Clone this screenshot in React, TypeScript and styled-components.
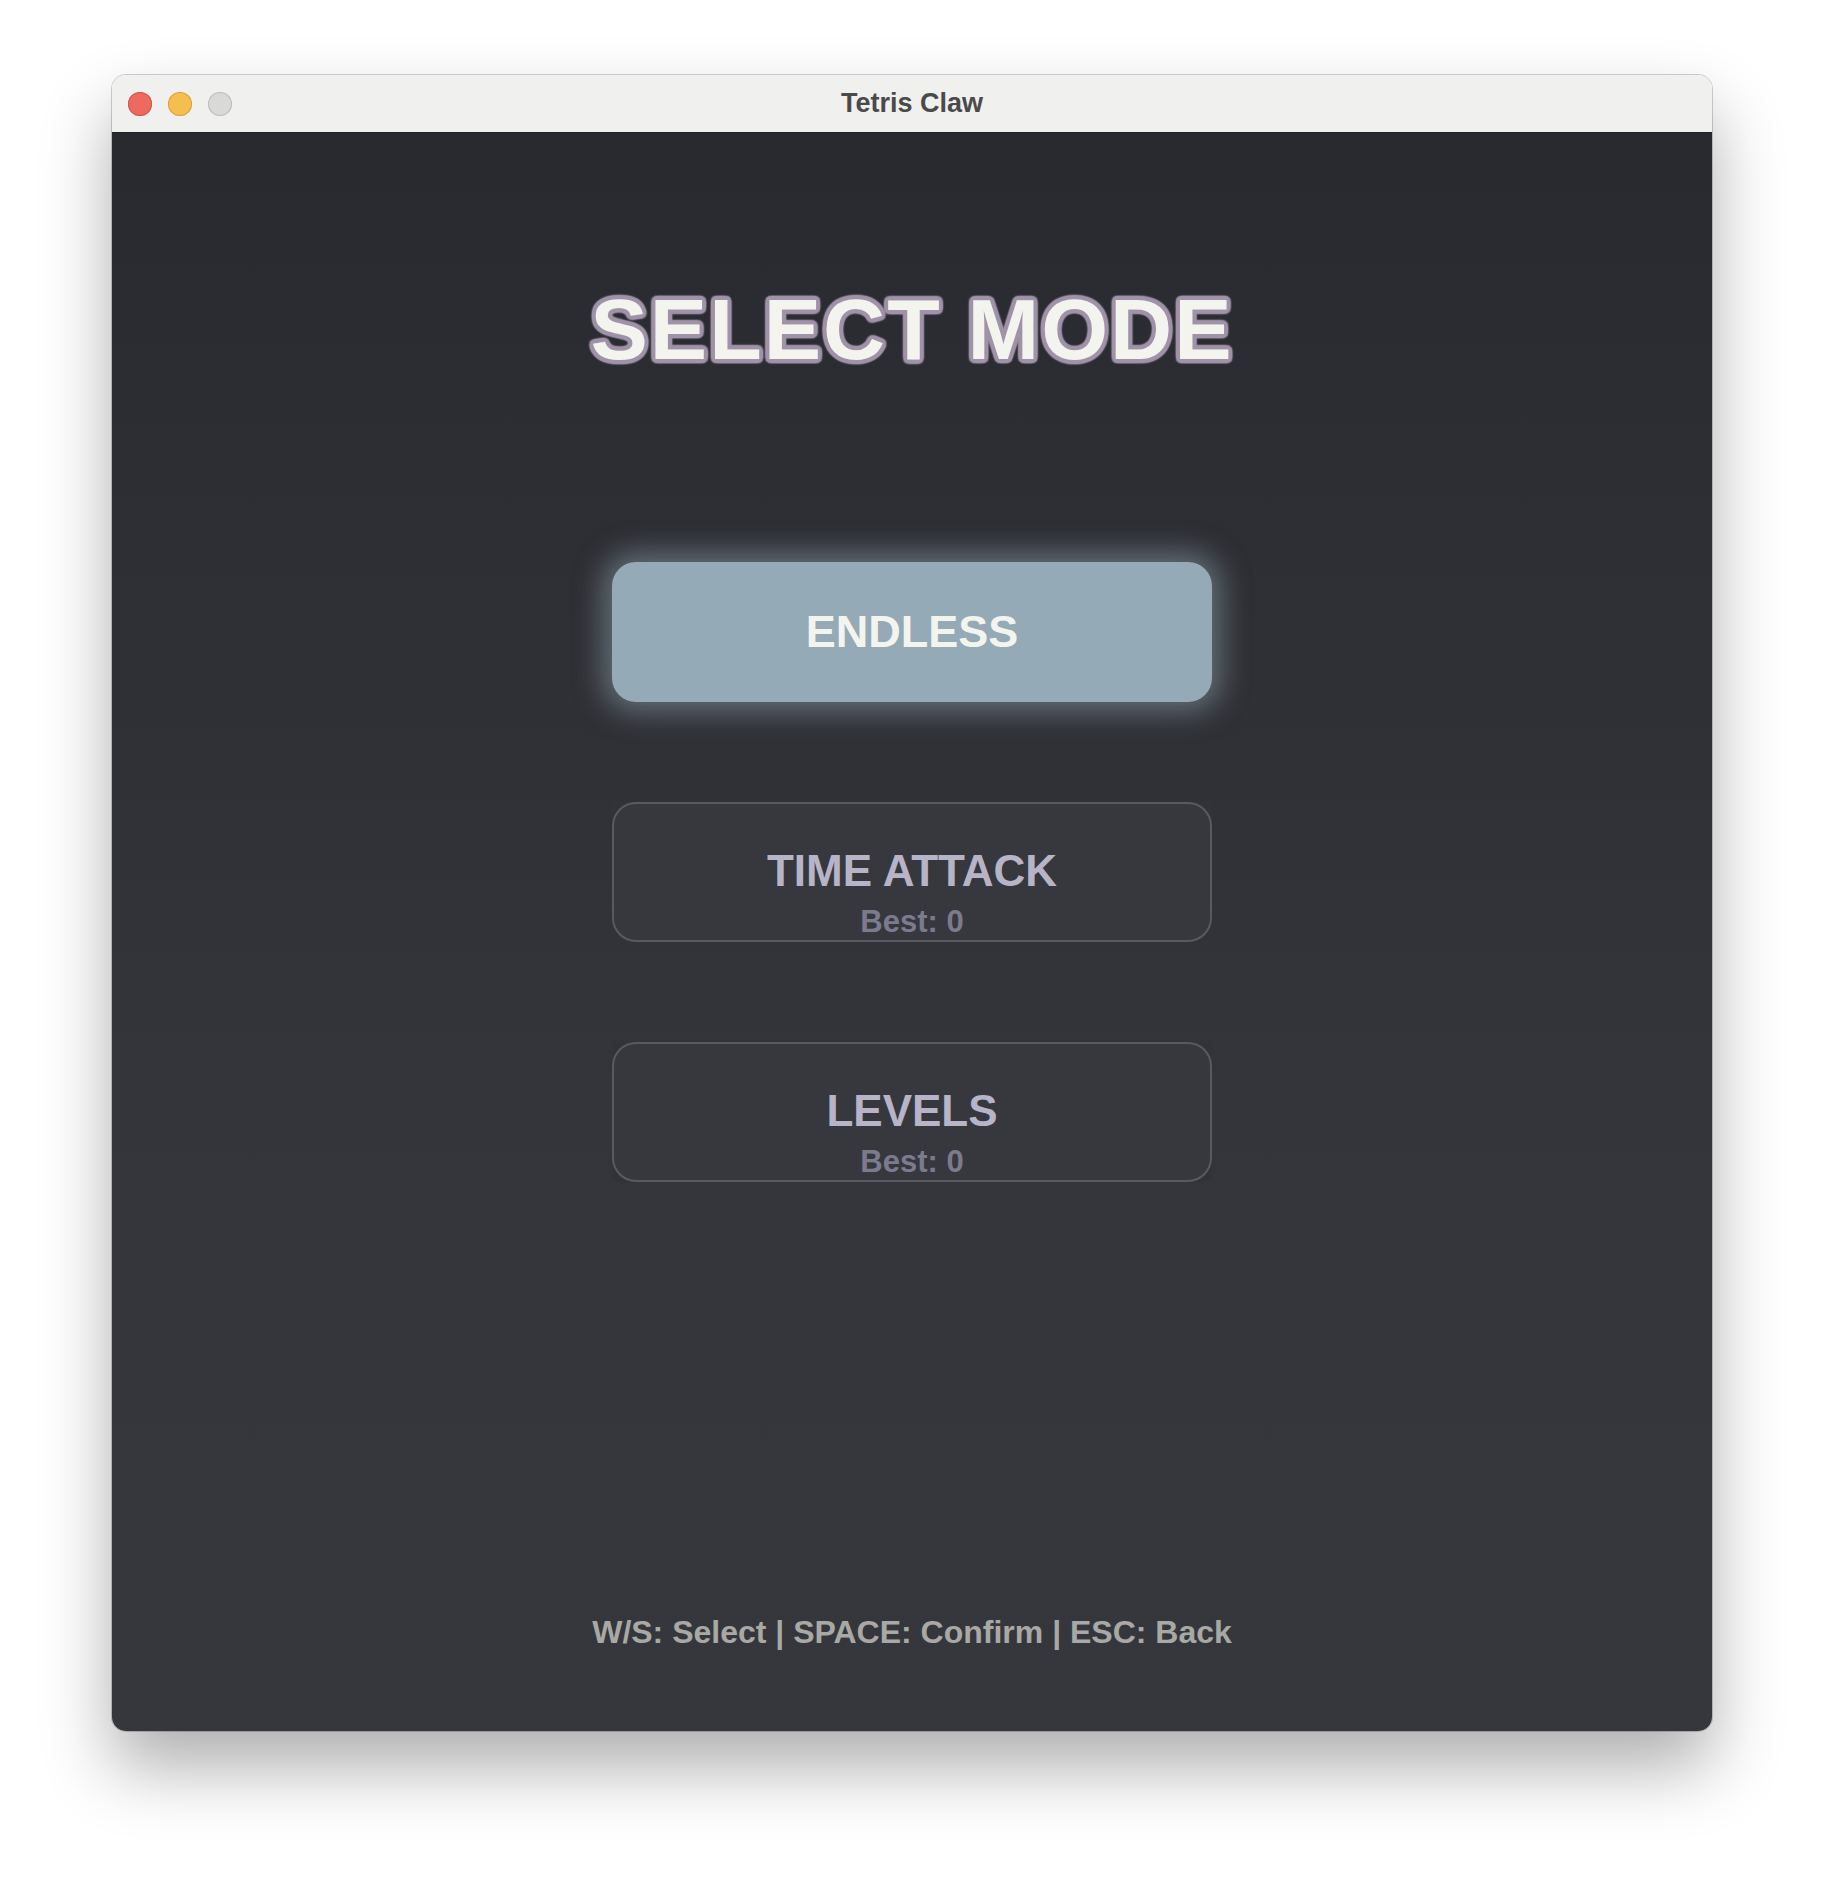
import React, { useState } from 'react';
import styled, { createGlobalStyle, css } from 'styled-components';

const MODES = [
  { id: 'endless', label: 'ENDLESS', best: null as number | null },
  { id: 'time_attack', label: 'TIME ATTACK', best: 0 },
  { id: 'levels', label: 'LEVELS', best: 0 },
];

const GlobalStyle = createGlobalStyle`
  html, body {
    margin: 0;
    padding: 0;
    background: #ffffff;
  }
  body {
    font-family: 'Liberation Sans', Arial, sans-serif;
  }
`;

const Page = styled.div`
  width: 1824px;
  height: 1880px;
  display: flex;
  justify-content: center;
  padding-top: 75px;
  box-sizing: border-box;
  background: #ffffff;
`;

const Window = styled.div`
  width: 1600px;
  height: 1656px;
  display: flex;
  flex-direction: column;
  border-radius: 14px;
  overflow: hidden;
  box-shadow: 0 36px 70px rgba(0, 0, 0, 0.32), 0 0 0 1px rgba(0, 0, 0, 0.18);
`;

const TitleBar = styled.div`
  height: 58px;
  flex-shrink: 0;
  display: flex;
  align-items: center;
  position: relative;
  padding-left: 16px;
  gap: 16px;
  background: #f0f0ee;
  border-bottom: 1px solid #1f1f22;
  box-sizing: border-box;
`;

const Light = styled.span<{ $fill: string; $edge: string }>`
  width: 24px;
  height: 24px;
  border-radius: 50%;
  background: ${p => p.$fill};
  box-shadow: inset 0 0 0 1px ${p => p.$edge};
`;

const WindowTitle = styled.div`
  position: absolute;
  left: 0;
  right: 0;
  text-align: center;
  font-family: 'Liberation Sans', Arial, sans-serif;
  font-weight: 700;
  font-size: 27px;
  color: #4a4a4a;
  pointer-events: none;
`;

const Content = styled.div`
  flex: 1;
  display: flex;
  flex-direction: column;
  align-items: center;
  padding-top: 146px;
  padding-bottom: 79px;
  background: linear-gradient(180deg, #292a2f 0%, #34353a 60%, #36373c 100%);
`;

const outline = (c: string, r: number) => {
  const parts: string[] = [];
  for (let i = 0; i < 16; i++) {
    const a = (i / 16) * Math.PI * 2;
    parts.push(`${(Math.cos(a) * r).toFixed(2)}px ${(Math.sin(a) * r).toFixed(2)}px 1.5px ${c}`);
  }
  return parts.join(', ');
};

const Heading = styled.h1`
  margin: 0;
  font-family: 'Liberation Sans', Arial, sans-serif;
  font-weight: 700;
  font-size: 86px;
  line-height: 100px;
  letter-spacing: 2px;
  color: #f4f4ef;
  text-shadow: ${outline('#a093a9', 4)};
`;

const ModeList = styled.div`
  margin-top: 183px;
  display: flex;
  flex-direction: column;
  gap: 100px;
`;

const ModeSlot = styled.div<{ $active: boolean }>`
  width: 600px;
  height: 140px;
  background: ${p => (p.$active ? 'transparent' : '#323338')};
`;

const ModeButton = styled.div<{ $active: boolean }>`
  width: 100%;
  height: 100%;
  box-sizing: border-box;
  border-radius: 24px;
  display: flex;
  flex-direction: column;
  align-items: center;
  font-family: 'Liberation Sans', Arial, sans-serif;
  font-weight: 700;
  cursor: pointer;
  ${p =>
    p.$active
      ? css`
          justify-content: center;
          background: #94aab6;
          box-shadow: 0 0 28px 10px rgba(148, 170, 182, 0.5);
        `
      : css`
          padding-top: 42px;
          background: #37383d;
          border: 2px solid #595a60;
        `}
`;

const ModeLabel = styled.div<{ $active: boolean }>`
  font-size: ${p => (p.$active ? '45px' : '44px')};
  line-height: 50px;
  color: ${p => (p.$active ? '#f4f4ee' : '#b7b4c8')};
`;

const BestScore = styled.div`
  margin-top: 8px;
  font-size: 31px;
  line-height: 36px;
  color: #7c7a8d;
`;

const Hint = styled.div`
  margin-top: auto;
  font-family: 'Liberation Sans', Arial, sans-serif;
  font-weight: 700;
  font-size: 32px;
  line-height: 40px;
  color: #a8a9a5;
`;

const App: React.FC = () => {
  const [selected, setSelected] = useState('endless');

  return (
    <>
      <GlobalStyle />
      <Page>
        <Window>
          <TitleBar>
            <Light $fill="#ee6a5f" $edge="#d4554a" />
            <Light $fill="#f5bf4f" $edge="#d9a23b" />
            <Light $fill="#d9d9d7" $edge="#bdbdbb" />
            <WindowTitle>Tetris Claw</WindowTitle>
          </TitleBar>
          <Content>
            <Heading>SELECT MODE</Heading>
            <ModeList>
              {MODES.map(mode => {
                const active = selected === mode.id;
                return (
                  <ModeSlot key={mode.id} $active={active}>
                    <ModeButton $active={active} onClick={() => setSelected(mode.id)}>
                      <ModeLabel $active={active}>{mode.label}</ModeLabel>
                      {!active && mode.best !== null && <BestScore>Best: {mode.best}</BestScore>}
                    </ModeButton>
                  </ModeSlot>
                );
              })}
            </ModeList>
            <Hint>W/S: Select | SPACE: Confirm | ESC: Back</Hint>
          </Content>
        </Window>
      </Page>
    </>
  );
};

export default App;
